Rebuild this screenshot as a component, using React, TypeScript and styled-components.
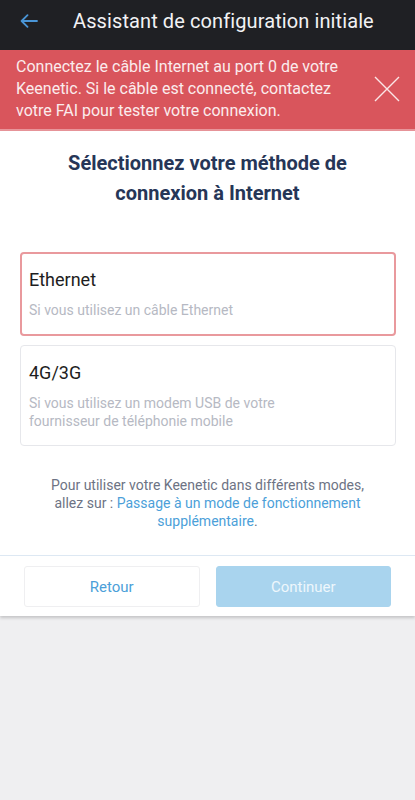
import React from "react"
import styled, { createGlobalStyle } from "styled-components"

const GlobalStyle = createGlobalStyle`
  html, body {
    margin: 0;
    padding: 0;
    background: #efeff1;
    font-family: Roboto, "Noto Sans", "Liberation Sans", sans-serif;
  }
  * {
    box-sizing: border-box;
  }
`

const Page = styled.div`
  min-height: 800px;
  background: #efeff1;
`

const TopBar = styled.header`
  height: 50px;
  background: #1f2024;
  display: flex;
  align-items: center;
  padding: 0 16px 8px 18px;
`

const BackButton = styled.button`
  border: none;
  background: none;
  padding: 0;
  width: 22px;
  height: 22px;
  display: flex;
  align-items: center;
  justify-content: center;
`

const TopTitle = styled.h1`
  margin: 0 0 0 33px;
  font-size: 20px;
  font-weight: 400;
  color: #f2f2f4;
  letter-spacing: 0.1px;
  white-space: nowrap;
`

const Alert = styled.div`
  background: #d9555c;
  border-bottom: 2px solid #e8959a;
  display: flex;
  align-items: center;
  padding: 6px 14px 7px 16px;
  min-height: 74px;
`

const AlertText = styled.p`
  margin: 0;
  flex: 1;
  font-size: 16px;
  line-height: 22px;
  color: #fbeced;
`

const CloseButton = styled.button`
  border: none;
  background: none;
  padding: 0;
  margin-left: 12px;
  width: 28px;
  height: 28px;
  display: flex;
  align-items: center;
  justify-content: center;
`

const Card = styled.main`
  background: #ffffff;
  box-shadow: 0 2px 3px rgba(0, 0, 0, 0.18);
`

const Heading = styled.h2`
  margin: 0;
  padding: 17px 30px 0;
  text-align: center;
  font-size: 20px;
  line-height: 30px;
  font-weight: 700;
  color: #263657;
`

const Options = styled.div`
  display: flex;
  flex-direction: column;
  gap: 9px;
  padding: 44px 19px 0 20px;
`

const Option = styled.button<{ $active?: boolean }>`
  display: flex;
  flex-direction: column;
  align-items: flex-start;
  text-align: left;
  width: 100%;
  background: #ffffff;
  border: ${p => (p.$active ? "2px solid #e9999d" : "1px solid #e6e7eb")};
  border-radius: 4px;
  padding: ${p => (p.$active ? "13px 7px 15px" : "14px 8px 15px")};
  font-family: inherit;
  cursor: pointer;
`

const OptionTitle = styled.span`
  font-size: 18px;
  line-height: 25px;
  color: #1d1d21;
`

const OptionHint = styled.span`
  margin-top: 9px;
  font-size: 14px;
  line-height: 18px;
  color: #b6b9c3;
`

const Note = styled.p`
  margin: 0;
  padding: 30px 40px 25px;
  text-align: center;
  font-size: 14px;
  line-height: 18px;
  color: #6d7384;
`

const NoteLink = styled.a`
  color: #4c9fd9;
  text-decoration: none;
`

const Footer = styled.div`
  border-top: 1px solid #dde8f3;
  display: grid;
  grid-template-columns: 1fr 1fr;
  gap: 16px;
  padding: 10px 24px 9px;
`

const FooterButton = styled.button<{ $primary?: boolean }>`
  height: 41px;
  border-radius: 3px;
  font-family: inherit;
  font-size: 15px;
  border: 1px solid ${p => (p.$primary ? "#a9d4ee" : "#efeff1")};
  background: ${p => (p.$primary ? "#a9d4ee" : "#ffffff")};
  color: ${p => (p.$primary ? "#eef7fc" : "#4c9fd9")};
`

export default function App() {
  return (
    <Page>
      <GlobalStyle />
      <TopBar>
        <BackButton aria-label="Retour">
          <svg width="18" height="14" viewBox="0 0 18 14" fill="none">
            <path
              d="M17 7H2M7.5 1.2L1.6 7l5.9 5.8"
              stroke="#4a95d6"
              strokeWidth="1.8"
              strokeLinecap="round"
              strokeLinejoin="round"
            />
          </svg>
        </BackButton>
        <TopTitle>Assistant de configuration initiale</TopTitle>
      </TopBar>
      <Alert>
        <AlertText>
          Connectez le câble Internet au port 0 de votre Keenetic. Si le câble
          est connecté, contactez votre FAI pour tester votre connexion.
        </AlertText>
        <CloseButton aria-label="Fermer">
          <svg width="26" height="26" viewBox="0 0 26 26" fill="none">
            <path d="M1 1L25 25M25 1L1 25" stroke="#fbe6e7" strokeWidth="1.4" />
          </svg>
        </CloseButton>
      </Alert>
      <Card>
        <Heading>Sélectionnez votre méthode de connexion à Internet</Heading>
        <Options>
          <Option $active>
            <OptionTitle>Ethernet</OptionTitle>
            <OptionHint>Si vous utilisez un câble Ethernet</OptionHint>
          </Option>
          <Option>
            <OptionTitle>4G/3G</OptionTitle>
            <OptionHint>
              Si vous utilisez un modem USB de votre
              <br />
              fournisseur de téléphonie mobile
            </OptionHint>
          </Option>
        </Options>
        <Note>
          Pour utiliser votre Keenetic dans différents modes, allez sur :{" "}
          <NoteLink href="#">
            Passage à un mode de fonctionnement supplémentaire
          </NoteLink>
          .
        </Note>
        <Footer>
          <FooterButton>Retour</FooterButton>
          <FooterButton $primary disabled>
            Continuer
          </FooterButton>
        </Footer>
      </Card>
    </Page>
  )
}
